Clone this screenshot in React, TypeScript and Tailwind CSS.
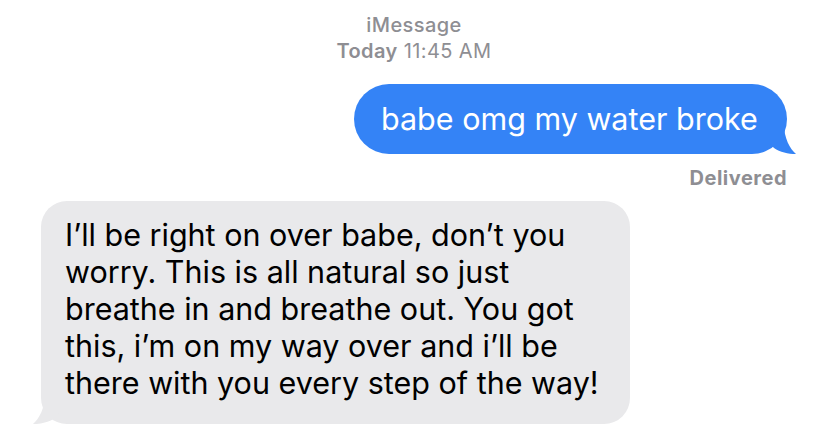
const LINES = [
  'I\u2019ll be right on over babe, don\u2019t you',
  'worry. This is all natural so just',
  'breathe in and breathe out. You got',
  'this, i\u2019m on my way over and i\u2019ll be',
  'there with you every step of the way!',
]

function BlueTail() {
  return (
    <svg
      className="absolute right-[-13px] bottom-0"
      width="30"
      height="30"
      viewBox="0 0 30 30"
    >
      <path d="M0 0 H14 C14 14 20 25 26 30 C18 30 10 28 4 24 C2 22 0 20 0 18 Z" fill="#3483f6" />
    </svg>
  )
}

function GrayTail() {
  return (
    <svg
      className="absolute left-[-12px] bottom-0"
      width="30"
      height="30"
      viewBox="0 0 30 30"
    >
      <path d="M30 0 H16 C16 14 10 25 4 30 C12 30 20 28 26 24 C28 22 30 20 30 18 Z" fill="#e9e9eb" />
    </svg>
  )
}

export default function App() {
  return (
    <div className="flex h-[448px] w-[828px] flex-col overflow-hidden bg-white font-['Inter','Liberation_Sans',sans-serif]">
      <header className="pt-[12px] text-center text-[20px] leading-[26px] tracking-[0.4px] text-[#8e8e93]">
        <p className="font-medium">iMessage</p>
        <p>
          <span className="font-semibold">Today</span> 11:45 AM
        </p>
      </header>

      <div className="mt-[20px] flex justify-end pr-[41px]">
        <div className="relative flex h-[70px] w-[433px] items-center rounded-[35px] bg-[#3483f6] pl-[27px] text-[30.5px] text-white">
          <span className="relative z-10">babe omg my water broke</span>
          <BlueTail />
        </div>
      </div>

      <p className="mt-[12px] pr-[41px] text-right text-[20px] leading-[24px] font-bold tracking-[0.5px] text-[#8e8e93]">
        Delivered
      </p>

      <div className="mt-[11px] flex pl-[41px]">
        <div className="relative w-[589px] rounded-[26px] bg-[#e9e9eb] pt-[15px] pr-[20px] pb-[23px] pl-[24px] text-[30.5px] leading-[37px] text-black">
          <div className="relative z-10">
            {LINES.map((line) => (
              <p key={line} className="whitespace-nowrap">
                {line}
              </p>
            ))}
          </div>
          <GrayTail />
        </div>
      </div>
    </div>
  )
}
